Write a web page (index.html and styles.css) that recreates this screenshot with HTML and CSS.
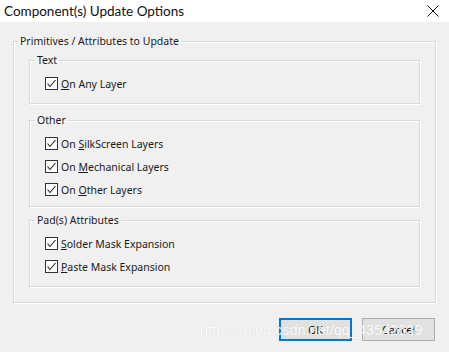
FILE: index.html
```html
<!DOCTYPE html>
<html lang="en">
<head>
  <meta charset="UTF-8">
  <title>Component(s) Update Options</title>
  <link rel="stylesheet" href="styles.css">
</head>
<body>
  <div class="dialog">
    <div class="titlebar">
      <span class="title">Component(s) Update Options</span>
      <svg class="close" width="12" height="12" viewBox="0 0 12 12">
        <path d="M0.5 0.5 L11.5 11.5 M11.5 0.5 L0.5 11.5" stroke="#111" stroke-width="1" fill="none"/>
      </svg>
    </div>

    <div class="main">
      <fieldset class="group outer">
        <legend>Primitives / Attributes to Update</legend>
        <div class="outer-body">

          <fieldset class="group inner group-text">
            <legend>Text</legend>
            <div class="rows">
              <label class="row">
                <svg class="box" width="13" height="13" viewBox="0 0 13 13"><rect x="0.5" y="0.5" width="12" height="12" fill="#fff" stroke="#333"/><path d="M2.5 6.5 L5 9.5 L10.5 3" stroke="#222" stroke-width="1.1" fill="none"/></svg>
                <span><u>O</u>n Any Layer</span>
              </label>
            </div>
          </fieldset>

          <fieldset class="group inner group-other">
            <legend>Other</legend>
            <div class="rows">
              <label class="row">
                <svg class="box" width="13" height="13" viewBox="0 0 13 13"><rect x="0.5" y="0.5" width="12" height="12" fill="#fff" stroke="#333"/><path d="M2.5 6.5 L5 9.5 L10.5 3" stroke="#222" stroke-width="1.1" fill="none"/></svg>
                <span>On <u>S</u>ilkScreen Layers</span>
              </label>
              <label class="row">
                <svg class="box" width="13" height="13" viewBox="0 0 13 13"><rect x="0.5" y="0.5" width="12" height="12" fill="#fff" stroke="#333"/><path d="M2.5 6.5 L5 9.5 L10.5 3" stroke="#222" stroke-width="1.1" fill="none"/></svg>
                <span>On <u>M</u>echanical Layers</span>
              </label>
              <label class="row">
                <svg class="box" width="13" height="13" viewBox="0 0 13 13"><rect x="0.5" y="0.5" width="12" height="12" fill="#fff" stroke="#333"/><path d="M2.5 6.5 L5 9.5 L10.5 3" stroke="#222" stroke-width="1.1" fill="none"/></svg>
                <span>On <u>O</u>ther Layers</span>
              </label>
            </div>
          </fieldset>

          <fieldset class="group inner group-pad">
            <legend>Pad(s) Attributes</legend>
            <div class="rows">
              <label class="row">
                <svg class="box" width="13" height="13" viewBox="0 0 13 13"><rect x="0.5" y="0.5" width="12" height="12" fill="#fff" stroke="#333"/><path d="M2.5 6.5 L5 9.5 L10.5 3" stroke="#222" stroke-width="1.1" fill="none"/></svg>
                <span><u>S</u>older Mask Expansion</span>
              </label>
              <label class="row">
                <svg class="box" width="13" height="13" viewBox="0 0 13 13"><rect x="0.5" y="0.5" width="12" height="12" fill="#fff" stroke="#333"/><path d="M2.5 6.5 L5 9.5 L10.5 3" stroke="#222" stroke-width="1.1" fill="none"/></svg>
                <span><u>P</u>aste Mask Expansion</span>
              </label>
            </div>
          </fieldset>

        </div>
      </fieldset>

      <div class="buttons">
        <button class="btn btn-default">OK</button>
        <button class="btn">Cancel</button>
      </div>
    </div>

    <div class="watermark">https://blog.csdn.net/qq_43542639</div>
  </div>
</body>
</html>
```

FILE: styles.css
```css
body {
  margin: 0;
  background-color: #f0f0f0;
  font-family: "Segoe UI", "Noto Sans", sans-serif;
  font-size: 10.5px;
  color: #1a1a1a;
}

.dialog {
  position: relative;
  width: 449px;
  height: 352px;
  overflow: hidden;
}

.titlebar {
  display: flex;
  align-items: center;
  justify-content: space-between;
  height: 22px;
  padding: 0 10px 0 4px;
  background-color: #fff;
}

.title {
  font-family: Lato, "Noto Sans", sans-serif;
  font-size: 13.5px;
  color: #111;
}

.close {
  display: block;
}

.main {
  padding-top: 11px;
}

/* group boxes */
.group {
  margin: 0;
  padding: 0;
  border: 1px solid #d9d9d9;
  box-shadow: 1px 1px 0 #fff, inset 1px 1px 0 #fff;
}

.group legend {
  margin-left: 5px;
  padding: 0 2px;
  line-height: 16px;
}

.outer {
  margin-left: 13px;
  width: 423px;
  box-sizing: border-box;
}

.outer > legend {
  margin-left: 4px;
}

.outer-body {
  padding: 3px 15px 15px;
}

.inner .rows {
  padding: 4px 0 0 15px;
}

.group-text .rows {
  padding-bottom: 8px;
}

.group-other {
  margin-top: 8px;
}

.group-other .rows {
  padding-bottom: 5px;
}

.group-pad {
  margin-top: 5px;
}

.group-pad .rows {
  padding-bottom: 8px;
}

.row {
  display: flex;
  align-items: center;
  gap: 3px;
  height: 23px;
}

.box {
  display: block;
  flex-shrink: 0;
}

/* dialog buttons */
.buttons {
  display: flex;
  justify-content: flex-end;
  gap: 10px;
  margin-top: 15px;
  padding-right: 14px;
}

.btn {
  width: 73px;
  height: 23px;
  padding: 0;
  background-color: #e1e1e1;
  border: 1px solid #adadad;
  font-family: inherit;
  font-size: 10.5px;
  color: #000;
}

.btn-default {
  border: 2px solid #0078d7;
}

.watermark {
  position: absolute;
  left: 200px;
  top: 322px;
  font-family: "Liberation Sans", sans-serif;
  font-size: 14.5px;
  color: #fff;
  text-shadow: 0 0 1px #c8c8c8;
  opacity: 0.85;
  pointer-events: none;
}
```
